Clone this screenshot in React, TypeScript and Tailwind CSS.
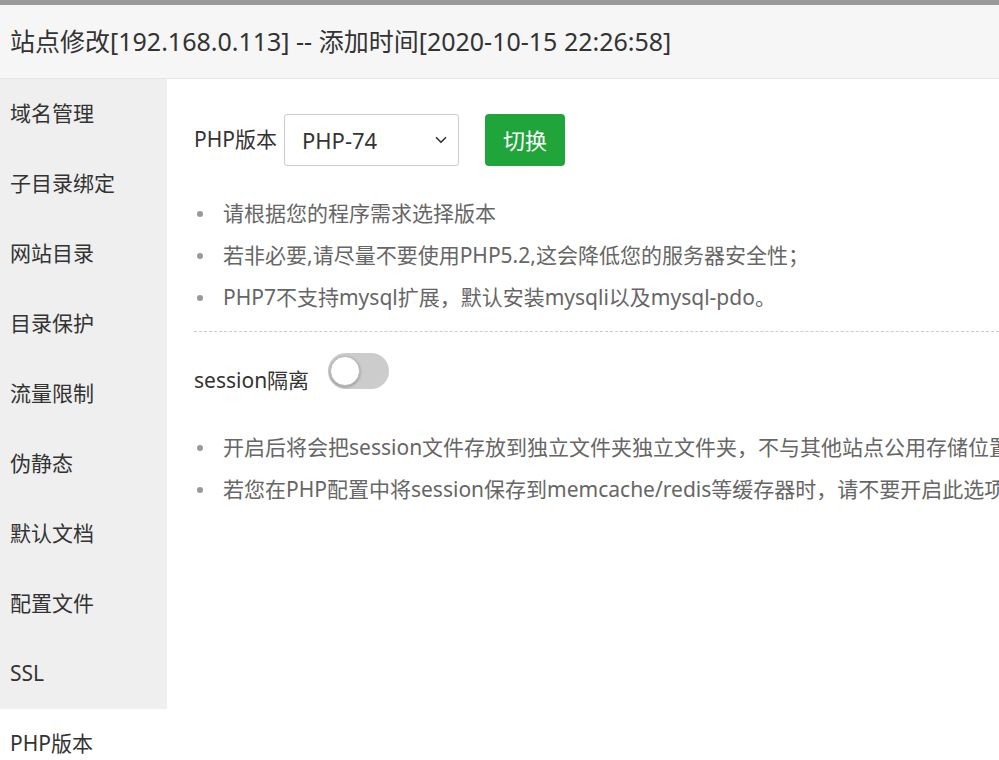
import { ChevronDown } from 'lucide-react'

const menu = ['域名管理', '子目录绑定', '网站目录', '目录保护', '流量限制', '伪静态', '默认文档', '配置文件', 'SSL', 'PHP版本']

const phpTips = [
  '请根据您的程序需求选择版本',
  '若非必要,请尽量不要使用PHP5.2,这会降低您的服务器安全性；',
  'PHP7不支持mysql扩展，默认安装mysqli以及mysql-pdo。',
]

const sessionTips = [
  '开启后将会把session文件存放到独立文件夹独立文件夹，不与其他站点公用存储位置',
  '若您在PHP配置中将session保存到memcache/redis等缓存器时，请不要开启此选项',
]

function Tips({ items }: { items: string[] }) {
  return (
    <ul className="text-[21px] text-[#666]">
      {items.map((t) => (
        <li key={t} className="flex items-center h-[42px] whitespace-nowrap">
          <span className="w-[6px] h-[6px] rounded-full bg-[#999] ml-[3px] mr-[20px] shrink-0" />
          {t}
        </li>
      ))}
    </ul>
  )
}

export default function App() {
  return (
    <div
      className="w-[999px] h-[760px] overflow-hidden bg-white flex flex-col"
      style={{ fontFamily: '"Noto Sans", "Noto Sans CJK SC", sans-serif' }}
    >
      <div className="h-[5px] bg-[#999] shrink-0" />

      {/* title */}
      <div className="h-[74px] shrink-0 bg-[#f6f6f6] border-b border-[#e6e6e6] flex items-center pl-[10px] text-[25px] text-[#333] whitespace-nowrap">
        站点修改[192.168.0.113] -- 添加时间[2020-10-15 22:26:58]
      </div>

      <div className="flex flex-1 min-h-0">
        {/* side menu */}
        <div className="w-[167px] shrink-0 flex flex-col bg-[#efefef]">
          {menu.map((m) => (
            <div
              key={m}
              className={
                'h-[70px] shrink-0 flex items-center pl-[10px] text-[21px] text-[#333] ' +
                (m === 'PHP版本' ? 'bg-white' : '')
              }
            >
              {m}
            </div>
          ))}
        </div>

        {/* content */}
        <div className="flex-1 pl-[27px] pt-[35px] text-[#333] overflow-hidden">
          <div className="flex items-center h-[52px]">
            <span className="text-[21px] mr-[7px]">PHP版本</span>
            <div className="w-[175px] h-[52px] border border-[#ccc] rounded-[3px] flex items-center justify-between pl-[17px] pr-[8px] text-[22px]">
              <span>PHP-74</span>
              <ChevronDown size={18} strokeWidth={2.2} className="text-[#333]" />
            </div>
            <button className="ml-[26px] w-[80px] h-[52px] rounded-[4px] bg-[#20a53a] text-white text-[22px]">
              切换
            </button>
          </div>

          <div className="mt-[27px]">
            <Tips items={phpTips} />
          </div>

          <div className="mt-[12px] border-t border-dashed border-[#ccc]" />

          <div className="flex items-end mt-[20px] h-[40px]">
            <span className="text-[21px] leading-none mb-[1px] mr-[19px]">session隔离</span>
            <div className="relative w-[61px] h-[36px] rounded-full bg-[#ccc] mb-[3px]">
              <div className="absolute left-[2px] top-[3px] w-[30px] h-[30px] rounded-full bg-white border border-[#bbb] shadow-[0_1px_3px_rgba(0,0,0,0.3)]" />
            </div>
          </div>

          <div className="mt-[35px]">
            <Tips items={sessionTips} />
          </div>
        </div>
      </div>
    </div>
  )
}
